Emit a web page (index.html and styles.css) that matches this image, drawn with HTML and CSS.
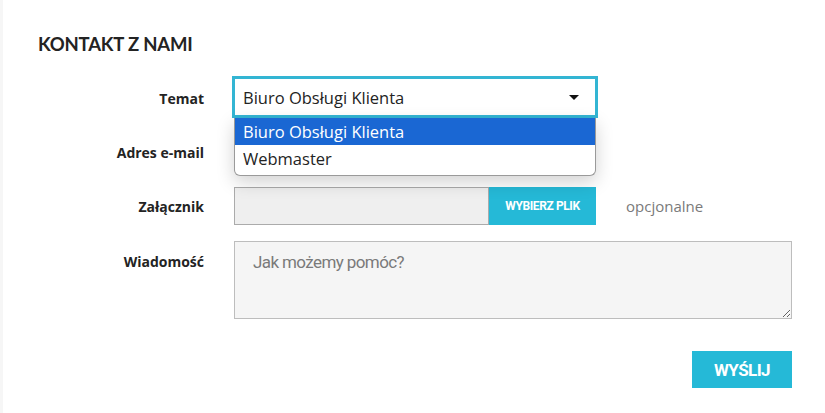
FILE: index.html
```html
<!DOCTYPE html>
<html lang="pl">
<head>
    <meta charset="UTF-8">
    <meta name="viewport" content="width=device-width, initial-scale=1.0">
    <title>Kontakt z nami</title>
    <link rel="stylesheet" href="styles.css">
</head>
<body>
    <section class="contact">
        <h1>KONTAKT Z NAMI</h1>

        <form class="contact-form">
            <div class="form-row">
                <label>Temat</label>
                <div class="select-wrap">
                    <div class="select-box">
                        <span>Biuro Obsługi Klienta</span>
                        <svg class="select-arrow" width="10" height="6" viewBox="0 0 10 6"><path d="M0 0h10L5 5z" fill="#111"/></svg>
                    </div>
                    <ul class="select-list">
                        <li class="selected">Biuro Obsługi Klienta</li>
                        <li>Webmaster</li>
                    </ul>
                </div>
            </div>

            <div class="form-row">
                <label for="email">Adres e-mail</label>
                <input type="email" id="email" class="text-input">
            </div>

            <div class="form-row">
                <label>Załącznik</label>
                <div class="file-input">
                    <span class="file-name"></span>
                    <span class="file-btn">WYBIERZ PLIK</span>
                </div>
                <span class="hint">opcjonalne</span>
            </div>

            <div class="form-row">
                <label for="message" class="label-top">Wiadomość</label>
                <textarea id="message" class="message" placeholder="Jak możemy pomóc?"></textarea>
            </div>

            <div class="form-footer">
                <button type="submit" class="send-btn">WYŚLIJ</button>
            </div>
        </form>
    </section>
</body>
</html>
```

FILE: styles.css
```css
body {
    margin: 0;
    background: #fff;
    font-family: "Open Sans", Arial, sans-serif;
    color: #232323;
}
.contact {
    width: 754px;
    padding: 33px 0 20px 35px;
    min-height: 360px;
    border-left: 3px solid #f6f6f6;
}
h1 {
    margin: 0 0 24px;
    font-family: Lato, sans-serif;
    font-weight: 700;
    font-size: 18.5px;
    letter-spacing: -0.2px;
    color: #232323;
}
.form-row {
    display: grid;
    grid-template-columns: 166px 362px 1fr;
    column-gap: 30px;
    align-items: center;
    margin-bottom: 16px;
}
.form-row label {
    text-align: right;
    font-weight: 700;
    font-size: 14px;
    color: #232323;
}
.form-row .label-top {
    align-self: start;
    padding-top: 11px;
}
.select-wrap {
    position: relative;
    height: 38px;
}
.select-box {
    position: absolute;
    left: -2px;
    top: -3px;
    right: -2px;
    height: 36px;
    border: 3px solid #33b5d3;
    background: #fff;
    display: flex;
    align-items: center;
    justify-content: space-between;
    padding: 0 16px 0 8px;
    font-size: 16.5px;
    color: #232323;
}
.select-arrow {
    margin-top: 1px;
}
.select-list {
    position: absolute;
    left: 0;
    right: 0;
    top: 39px;
    margin: 0;
    padding: 0 0 3px;
    list-style: none;
    background: #fff;
    border: 1px solid #9a9a9a;
    border-top: none;
    border-radius: 0 0 6px 6px;
    box-shadow: 0 6px 18px rgba(0, 0, 0, 0.18);
    z-index: 2;
    font-size: 16.5px;
}
.select-list li {
    height: 27px;
    line-height: 27px;
    padding-left: 8px;
    color: #232323;
}
.select-list li.selected {
    background: #1a67d3;
    color: #fff;
}
.text-input {
    height: 38px;
    box-sizing: border-box;
    border: 1px solid #bbb;
    background: #f1f1f1;
}
.file-input {
    display: flex;
    height: 38px;
}
.file-name {
    flex: 1;
    border: 1px solid #ababab;
    background: #efefef;
}
.file-btn {
    width: 107px;
    display: flex;
    align-items: center;
    justify-content: center;
    background: #25b9d7;
    color: #fff;
    font-family: Roboto, sans-serif;
    font-weight: 700;
    font-size: 12px;
    letter-spacing: -0.4px;
}
.hint {
    font-size: 15px;
    color: #7a7a7a;
}
.message {
    grid-column: 2 / 4;
    height: 78px;
    box-sizing: border-box;
    padding: 10px 18px;
    border: 1px solid #bdbdbd;
    background: #f5f5f5;
    font-family: Roboto, sans-serif;
    font-size: 17px;
    letter-spacing: -0.6px;
    resize: vertical;
}
.message::placeholder {
    color: #7a7a7a;
}
.form-footer {
    display: flex;
    justify-content: flex-end;
    padding-top: 16px;
}
.send-btn {
    width: 100px;
    height: 37px;
    border: none;
    background: #25b9d7;
    color: #fff;
    font-family: Roboto, sans-serif;
    font-weight: 700;
    font-size: 17px;
    letter-spacing: -0.6px;
    cursor: pointer;
}
```
